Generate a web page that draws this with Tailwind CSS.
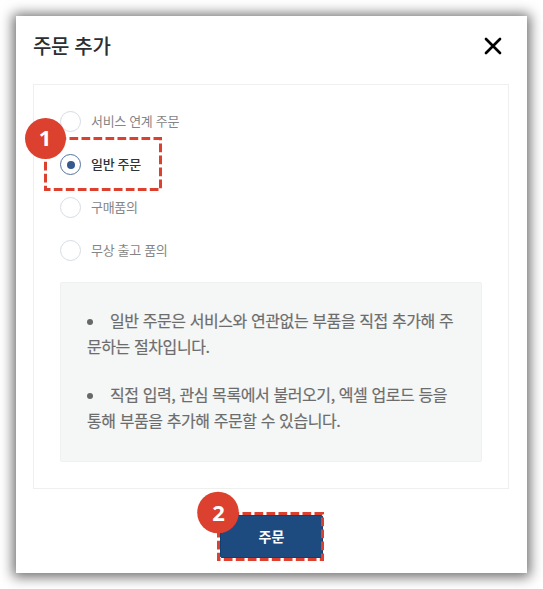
<!DOCTYPE html>
<html lang="ko">
<head>
<meta charset="utf-8">
<title>주문 추가</title>
<script src="https://cdn.jsdelivr.net/npm/@tailwindcss/browser@4"></script>
</head>
<body class="bg-white w-[543px] h-[589px] overflow-hidden p-4 font-['Noto_Sans_CJK_KR',sans-serif]">
<main class="relative w-[511px] h-[557px] bg-white shadow-[0_1px_12px_3px_rgba(0,0,0,0.58)] pl-[17px] pr-[18px] flex flex-col">
  <header class="h-[68px] shrink-0 flex items-start justify-between pr-[7px]">
    <h1 class="mt-[15px] text-[20px] leading-[30px] font-medium tracking-[-0.35px] text-[#2b2f33]">주문 추가</h1>
    <button aria-label="닫기" class="mt-[21px]"><svg class="block" width="18" height="18" viewBox="0 0 18 18" fill="none" stroke="#000" stroke-width="2.7" stroke-linecap="round"><path d="M2 2L16 16M16 2L2 16"/></svg></button>
  </header>
  <section class="h-[405px] shrink-0 border border-[#eeefef] px-[26px] pt-[26px]">
    <div class="flex flex-col gap-[22px] text-[13px] leading-[21px] tracking-[-0.33px] text-[#858585]">
      <label class="flex items-center gap-[10px] h-[21px]"><span class="size-[21px] rounded-full border border-[#d6dce5]"></span><span class="pb-[2px]">서비스 연계 주문</span></label>
      <label class="flex items-center gap-[10px] h-[21px]"><span class="size-[21px] rounded-full border border-[#5674a0] flex items-center justify-center"><span class="size-[8px] rounded-full bg-[#36598e]"></span></span><span class="pb-[2px] text-[#303439] font-medium">일반 주문</span></label>
      <label class="flex items-center gap-[10px] h-[21px]"><span class="size-[21px] rounded-full border border-[#d6dce5]"></span><span class="pb-[2px]">구매품의</span></label>
      <label class="flex items-center gap-[10px] h-[21px]"><span class="size-[21px] rounded-full border border-[#d6dce5]"></span><span class="pb-[2px]">무상 출고 품의</span></label>
    </div>
    <div class="mt-[21px] w-[422px] h-[180px] rounded-[2px] border border-[#eff1f1] bg-[#f5f7f7] pl-[26px] pt-[24px] text-[16px] leading-[26px] tracking-[-0.41px] text-[#6c6c6c] [-webkit-text-stroke:0.2px_#6c6c6c] whitespace-nowrap flex flex-col gap-[22px]">
      <div><div class="flex items-center"><span class="size-[6px] rounded-full bg-[#686868] mr-[17px] mt-1"></span><span>일반 주문은 서비스와 연관없는 부품을 직접 추가해 주</span></div><p>문하는 절차입니다.</p></div>
      <div><div class="flex items-center"><span class="size-[6px] rounded-full bg-[#686868] mr-[17px] mt-1"></span><span>직접 입력, 관심 목록에서 불러오기, 엑셀 업로드 등을</span></div><p>통해 부품을 추가해 주문할 수 있습니다.</p></div>
    </div>
  </section>
  <button class="mt-[26px] ml-[187px] w-[103px] h-[43px] pb-[2px] rounded-[2px] border border-[#123f72] bg-[#1d4b80] text-white text-[14px] leading-5 font-bold">주문</button>
</main>
<svg class="absolute left-0 top-0 pointer-events-none" width="543" height="589" viewBox="0 0 543 589">
  <g fill="none" stroke="#dc402e" stroke-width="3" stroke-dasharray="8.7 3.3"><path d="M45.5 138.5H160.5V189.5H45.5Z"/><path d="M218.5 513.5H322.5V559.5H218.5Z"/></g>
  <circle cx="45.5" cy="138.5" r="20.5" fill="#dc402e"/><circle cx="218" cy="512.5" r="20.8" fill="#dc402e"/>
  <g fill="#fff" font-family="Noto Sans" font-size="22" font-weight="700" text-anchor="middle"><text x="45" y="146">1</text><text x="218.5" y="520.5">2</text></g>
</svg>
</body>
</html>
